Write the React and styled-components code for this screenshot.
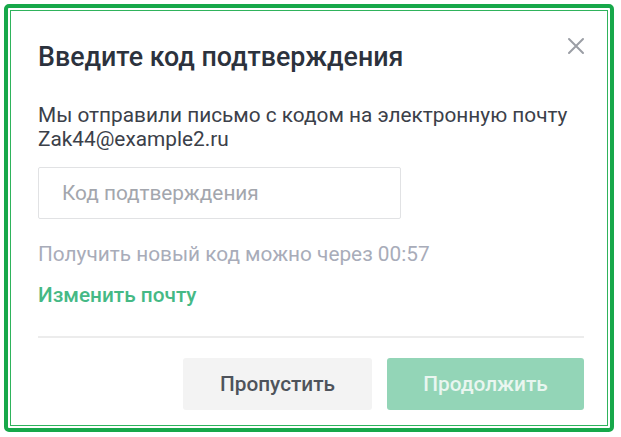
import React from "react";
import styled, { createGlobalStyle } from "styled-components";

const Global = createGlobalStyle`
  html, body { margin: 0; padding: 0; background: #fff; }
  body { font-family: Roboto, "Noto Sans", sans-serif; }
  * { box-sizing: border-box; }
`;

const Frame = styled.div`
  margin: 4px;
  width: 610px;
  height: 428px;
  border: 4px solid #17a84a;
  border-radius: 5px;
  padding: 2px;
`;

const Dialog = styled.div`
  height: 100%;
  border: 1px solid #2fb35c;
  padding: 30px 23px 0 27px;
  display: flex;
  flex-direction: column;
  background: #fff;
`;

const Header = styled.div`
  display: flex;
  justify-content: space-between;
  align-items: flex-start;
`;

const Title = styled.h2`
  margin: 0;
  font-size: 26.8px;
  line-height: 32px;
  font-weight: 500;
  color: #2c323d;
`;

const Close = styled.button`
  border: 0;
  background: none;
  padding: 0;
  margin: -4px -1px 0 0;
  width: 18px;
  height: 18px;
  display: flex;
  cursor: pointer;
`;

const Text = styled.p`
  margin: 30px 0 0;
  font-size: 20.8px;
  line-height: 24px;
  color: #3b4049;
`;

const Input = styled.input`
  margin-top: 16px;
  width: 363px;
  height: 52px;
  border: 1px solid #e1e2e4;
  border-radius: 2px;
  padding: 0 23px;
  font-family: inherit;
  font-size: 20.8px;
  color: #3b4049;
  outline: none;
  &::placeholder { color: #a3a6ad; }
`;

const Hint = styled.p`
  margin: 23px 0 0;
  font-size: 20.8px;
  line-height: 24px;
  color: #a8acb9;
`;

const Link = styled.a`
  margin-top: 17px;
  font-size: 20.8px;
  line-height: 24px;
  font-weight: 500;
  color: #45b985;
  text-decoration: none;
  align-self: flex-start;
`;

const Divider = styled.hr`
  margin: 29px 0 0;
  border: 0;
  border-top: 2px solid #ececec;
`;

const Actions = styled.div`
  margin-top: 20px;
  display: flex;
  justify-content: flex-end;
  gap: 15px;
`;

const Button = styled.button`
  height: 52px;
  width: ${(p) => p.$w}px;
  border: 0;
  border-radius: 3px;
  font-family: inherit;
  font-size: 20.8px;
  font-weight: 500;
  background: ${(p) => (p.$primary ? "#93d5b7" : "#f3f3f3")};
  color: ${(p) => (p.$primary ? "#e9f6f0" : "#4e535b")};
  cursor: pointer;
`;

export default function App() {
  return (
    <>
      <Global />
      <Frame>
        <Dialog>
          <Header>
            <Title>Введите код подтверждения</Title>
            <Close aria-label="Закрыть">
              <svg width="18" height="18" viewBox="0 0 18 18">
                <path d="M2 2L16 16M16 2L2 16" stroke="#9b9ea5" strokeWidth="2" strokeLinecap="round" />
              </svg>
            </Close>
          </Header>
          <Text>
            Мы отправили письмо с кодом на электронную почту
            <br />
            Zak44@example2.ru
          </Text>
          <Input placeholder="Код подтверждения" />
          <Hint>Получить новый код можно через 00:57</Hint>
          <Link href="#">Изменить почту</Link>
          <Divider />
          <Actions>
            <Button $w={189}>Пропустить</Button>
            <Button $primary $w={197}>Продолжить</Button>
          </Actions>
        </Dialog>
      </Frame>
    </>
  );
}
